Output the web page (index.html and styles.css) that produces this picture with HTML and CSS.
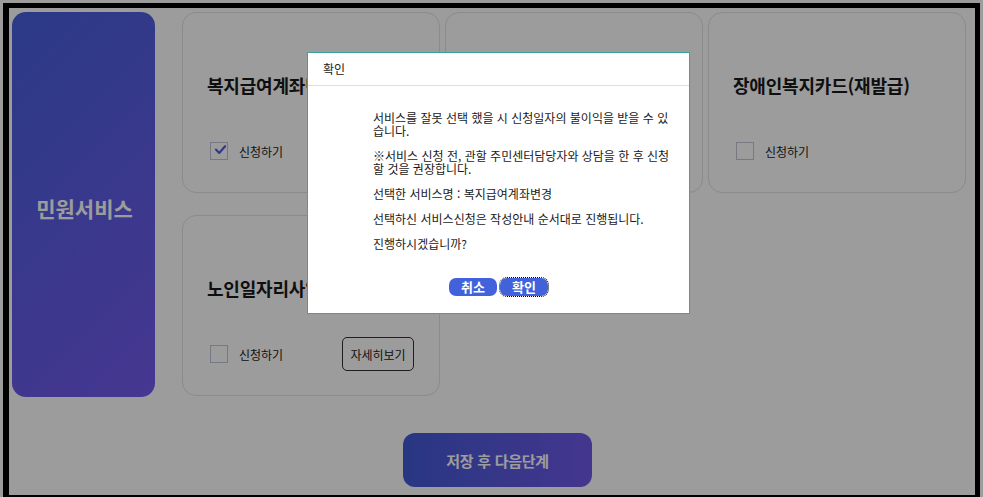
FILE: index.html
```html
<!DOCTYPE html>
<html lang="ko">
<head>
    <meta charset="UTF-8">
    <meta name="viewport" content="width=device-width, initial-scale=1.0">
    <title>민원서비스 신청</title>
    <link rel="stylesheet" href="styles.css">
</head>
<body>
    <div class="frame">
        <div class="serviceWrap">
            <div class="sideTitle">민원서비스</div>
            <div class="cardGrid">
                <div class="card">
                    <h3 class="cardTitle">복지급여계좌변경</h3>
                    <div class="cardRow">
                        <label class="check"><span class="checkBox checked"><svg viewBox="0 0 18 18" width="18" height="18"><path d="M3.5 8.5 L7.5 12.5 L14.5 4.5" fill="none" stroke="#4f60e4" stroke-width="2.6" stroke-linecap="round" stroke-linejoin="round"/></svg></span>신청하기</label>
                    </div>
                </div>
                <div class="card">
                    <h3 class="cardTitle">기초연금신청</h3>
                    <div class="cardRow">
                        <label class="check"><span class="checkBox"></span>신청하기</label>
                    </div>
                </div>
                <div class="card">
                    <h3 class="cardTitle">장애인복지카드(재발급)</h3>
                    <div class="cardRow">
                        <label class="check"><span class="checkBox"></span>신청하기</label>
                    </div>
                </div>
                <div class="card">
                    <h3 class="cardTitle">노인일자리사업</h3>
                    <div class="cardRow">
                        <label class="check"><span class="checkBox"></span>신청하기</label>
                        <button type="button" class="btnDetail">자세히보기</button>
                    </div>
                </div>
            </div>
        </div>
        <div class="nextArea">
            <button type="button" class="btnNext">저장 후 다음단계</button>
        </div>
    </div>

    <div class="dimmed"></div>

    <div class="dialog">
        <div class="dialogHead">확인</div>
        <div class="dialogBody">
            <p>서비스를 잘못 선택 했을 시 신청일자의 불이익을 받을 수 있습니다.</p>
            <p>※서비스 신청 전, 관할 주민센터담당자와 상담을 한 후 신청할 것을 권장합니다.</p>
            <p>선택한 서비스명 : 복지급여계좌변경</p>
            <p>선택하신 서비스신청은 작성안내 순서대로 진행됩니다.</p>
            <p>진행하시겠습니까?</p>
        </div>
        <div class="dialogBtns">
            <button type="button" class="btnDlg">취소</button>
            <button type="button" class="btnDlg focus">확인</button>
        </div>
    </div>
</body>
</html>
```

FILE: styles.css
```css
body {
    margin: 0;
    padding: 3px;
    background: #fff;
    font-family: "Noto Sans CJK KR", "Noto Sans", sans-serif;
    color: #1c1c1c;
    overflow: hidden;
}
.frame {
    height: 483px;
    border: solid #000;
    border-width: 5px 5px 6px 6px;
    padding: 4px 0 0 3px;
}
.serviceWrap {
    display: flex;
    gap: 27px;
}
.sideTitle {
    width: 143px;
    height: 385px;
    border-radius: 14px;
    background: linear-gradient(135deg, #465fdc, #745aee);
    color: #fff;
    font-size: 21px;
    font-weight: bold;
    display: flex;
    align-items: center;
    justify-content: center;
    padding: 7px 0 0 2px;
    box-sizing: border-box;
}
.cardGrid {
    display: grid;
    grid-template-columns: repeat(3, 258px);
    grid-auto-rows: 181px;
    column-gap: 5px;
    row-gap: 22px;
}
.card {
    border: 1px solid #e3e3e3;
    border-radius: 14px;
    padding: 60px 25px 0 24px;
    box-sizing: border-box;
}
.cardTitle {
    margin: 0;
    font-size: 18px;
    line-height: 24px;
    font-weight: bold;
    letter-spacing: -0.2px;
    white-space: nowrap;
    color: #1a1a1a;
}
.cardRow {
    margin-top: 37px;
    min-height: 34px;
    display: flex;
    align-items: center;
    justify-content: space-between;
}
.check {
    display: flex;
    align-items: center;
    gap: 11px;
    font-size: 12px;
    color: #222;
    padding-left: 3px;
}
.checkBox {
    width: 16px;
    height: 16px;
    border: 1px solid #c2c5dc;
    display: flex;
    align-items: center;
    justify-content: center;
}
.checkBox svg {
    margin: -2px -1px 0 2px;
}
.btnDetail {
    font-family: inherit;
    font-size: 12px;
    color: #222;
    background: #fff;
    border: 1px solid #333;
    border-radius: 5px;
    width: 72px;
    height: 34px;
    padding: 0;
}
.nextArea {
    display: flex;
    justify-content: center;
    padding: 36px 0 0 8px;
}
.btnNext {
    width: 189px;
    height: 54px;
    border: none;
    border-radius: 12px;
    background: linear-gradient(to right, #425ad5, #7059ea);
    color: #fff;
    font-family: inherit;
    font-size: 15px;
    font-weight: bold;
    letter-spacing: -0.3px;
    box-shadow: 0 0 4px rgba(255,255,255,0.8);
}
.dimmed {
    position: fixed;
    inset: 0;
    background: rgba(0, 0, 0, 0.39);
}
.dialog {
    position: fixed;
    left: 307px;
    top: 52px;
    width: 381px;
    height: 260px;
    background: #fff;
    border: 1px solid #3aa3a3;
    display: flex;
    flex-direction: column;
}
.dialogHead {
    height: 32px;
    line-height: 31px;
    padding-left: 15px;
    font-size: 12px;
    color: #222;
    border-bottom: 1px solid #ddd;
}
.dialogBody {
    padding: 13px 0 0 65px;
    width: 302px;
    font-size: 12px;
    color: #1a1a1a;
}
.dialogBody p {
    margin: 12px 0;
    line-height: 13px;
}
.dialogBtns {
    margin-top: auto;
    padding-bottom: 17px;
    display: flex;
    justify-content: center;
    gap: 3px;
}
.btnDlg {
    width: 48px;
    height: 18px;
    padding: 0;
    border: none;
    border-radius: 7px;
    background: #4262dc;
    color: #fff;
    font-family: inherit;
    font-size: 13px;
    font-weight: bold;
    line-height: 18px;
}
.btnDlg.focus {
    outline: 1px dotted #000;
}
```
